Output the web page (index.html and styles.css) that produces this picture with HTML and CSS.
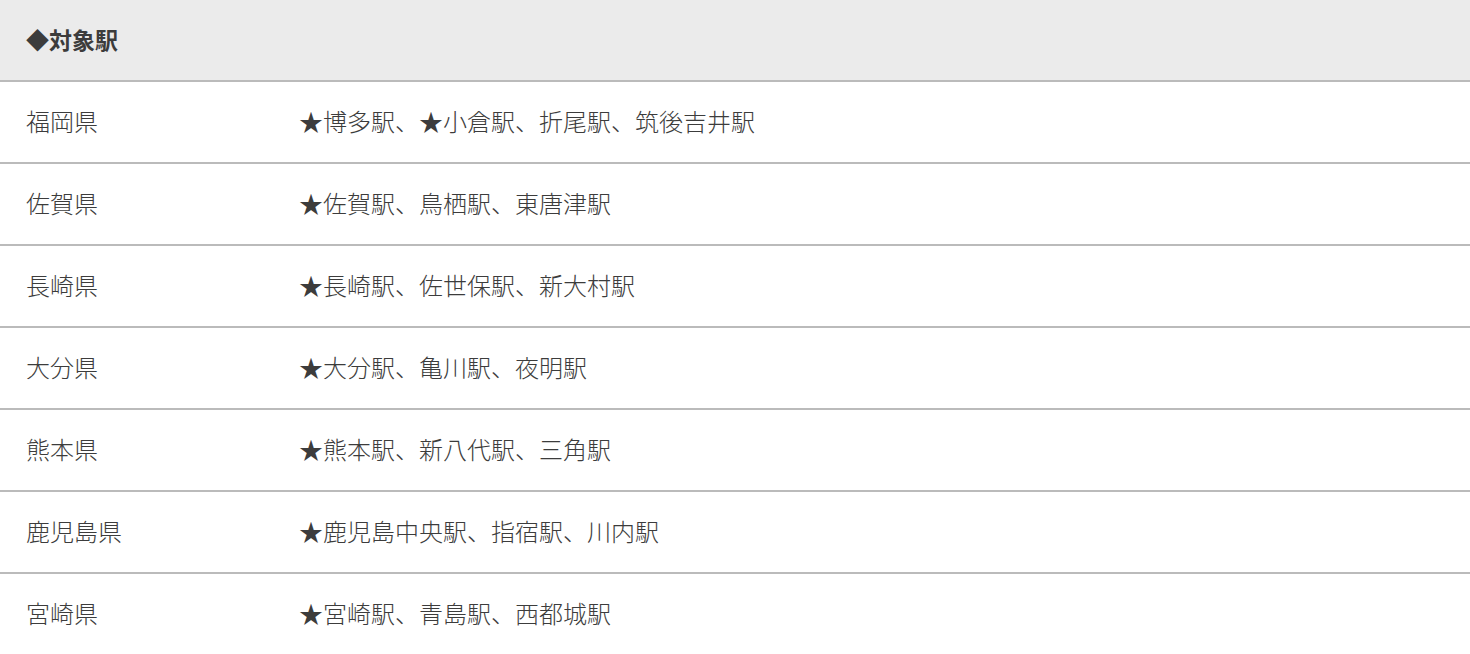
FILE: index.html
```html
<!DOCTYPE html>
<html lang="ja">
<head>
<meta charset="utf-8">
<link rel="stylesheet" href="styles.css">
</head>
<body>
<div class="table">
  <div class="head">◆対象駅</div>
  <div class="row"><div class="pref">福岡県</div><div class="stations">★博多駅、★小倉駅、折尾駅、筑後吉井駅</div></div>
  <div class="row"><div class="pref">佐賀県</div><div class="stations">★佐賀駅、鳥栖駅、東唐津駅</div></div>
  <div class="row"><div class="pref">長崎県</div><div class="stations">★長崎駅、佐世保駅、新大村駅</div></div>
  <div class="row"><div class="pref">大分県</div><div class="stations">★大分駅、亀川駅、夜明駅</div></div>
  <div class="row"><div class="pref">熊本県</div><div class="stations">★熊本駅、新八代駅、三角駅</div></div>
  <div class="row"><div class="pref">鹿児島県</div><div class="stations">★鹿児島中央駅、指宿駅、川内駅</div></div>
  <div class="row"><div class="pref">宮崎県</div><div class="stations">★宮崎駅、青島駅、西都城駅</div></div>
</div>
</body>
</html>
```
FILE: styles.css
```css
html, body {
  margin: 0;
  padding: 0;
  background: #fff;
}
body {
  font-family: "Noto Sans CJK JP", "Noto Sans", sans-serif;
  color: #3c3c3c;
  font-size: 24px;
  font-weight: 300;
}
.table {
  display: flex;
  flex-direction: column;
}
.head {
  height: 82px;
  display: flex;
  align-items: center;
  padding: 0 26px 2px;
  box-sizing: border-box;
  background: #ebebeb;
  border-bottom: 2px solid #bbbbbb;
  font-weight: bold;
  font-size: 23px;
}
.row {
  height: 82px;
  box-sizing: border-box;
  display: grid;
  grid-template-columns: 299px 1fr;
  align-items: center;
  padding-bottom: 3px;
  border-bottom: 2px solid #bbbbbb;
}
.pref {
  padding-left: 26px;
}
.stations {
  padding-left: 0;
}
```
